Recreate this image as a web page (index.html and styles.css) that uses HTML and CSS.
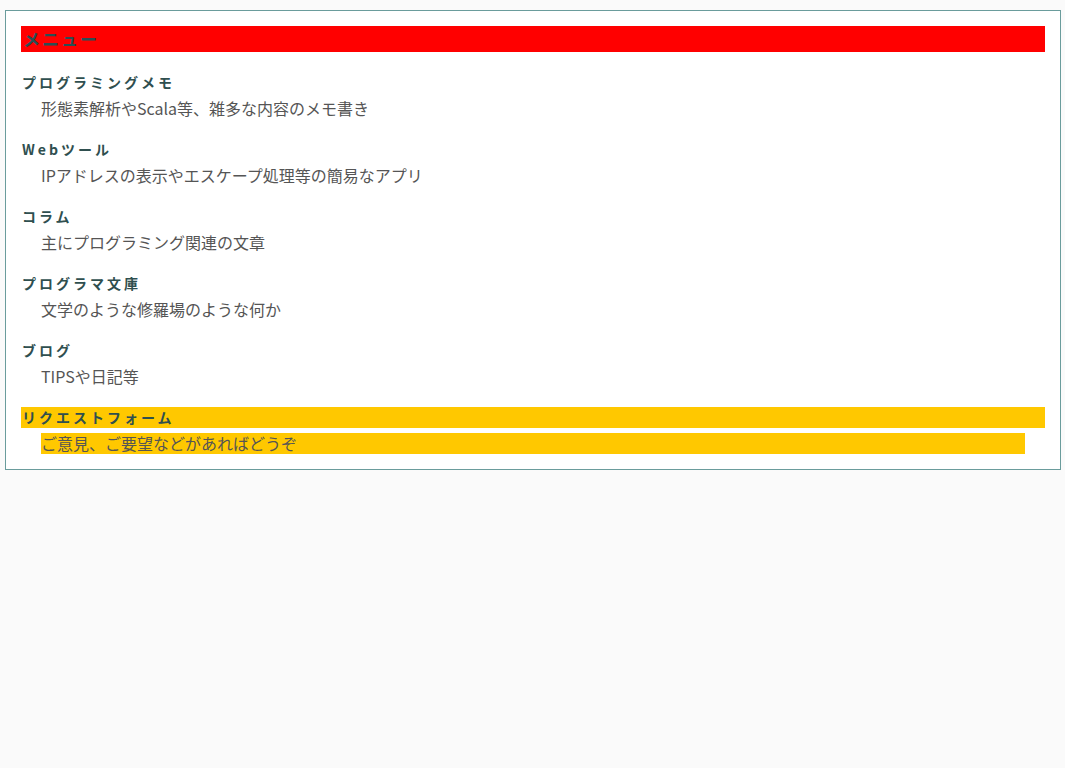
FILE: index.html
```html
<!DOCTYPE html>
<html lang="ja">
<head>
    <meta charset="UTF-8">
    <title>メニュー</title>
    <link rel="stylesheet" href="styles.css">
</head>
<body>
    <div class="menu">
        <h2 class="menu-title">メニュー</h2>
        <dl class="menu-list">
            <dt>プログラミングメモ</dt>
            <dd>形態素解析やScala等、雑多な内容のメモ書き</dd>
            <dt>Webツール</dt>
            <dd>IPアドレスの表示やエスケープ処理等の簡易なアプリ</dd>
            <dt>コラム</dt>
            <dd>主にプログラミング関連の文章</dd>
            <dt>プログラマ文庫</dt>
            <dd>文学のような修羅場のような何か</dd>
            <dt>ブログ</dt>
            <dd>TIPSや日記等</dd>
            <dt class="highlight">リクエストフォーム</dt>
            <dd class="highlight">ご意見、ご要望などがあればどうぞ</dd>
        </dl>
    </div>
</body>
</html>
```

FILE: styles.css
```css
body {
    margin: 0;
    background-color: #fafafa;
    font-family: "Noto Sans CJK JP", "Noto Sans", sans-serif;
}

.menu {
    margin: 10px 4px 0 5px;
    padding: 15px;
    background-color: #ffffff;
    border: 1px solid #6a9c9c;
}

.menu-title {
    margin: 0 0 20px 0;
    padding-left: 2px;
    height: 26px;
    line-height: 26px;
    font-size: 17px;
    font-weight: bold;
    letter-spacing: 2px;
    color: #2a4f55;
    background-color: #ff0000;
}

.menu-list {
    margin: 0;
}

.menu-list dt {
    margin: 0 0 5px 0;
    padding-left: 1px;
    height: 21px;
    line-height: 21px;
    font-size: 14px;
    font-weight: bold;
    letter-spacing: 3px;
    color: #2f4f4f;
}

.menu-list dd {
    margin: 0 20px 20px 20px;
    height: 21px;
    line-height: 21px;
    font-size: 16px;
    color: #555555;
}

.menu-list dd:last-child {
    margin-bottom: 0;
}

.highlight {
    background-color: #ffc800;
}
```
